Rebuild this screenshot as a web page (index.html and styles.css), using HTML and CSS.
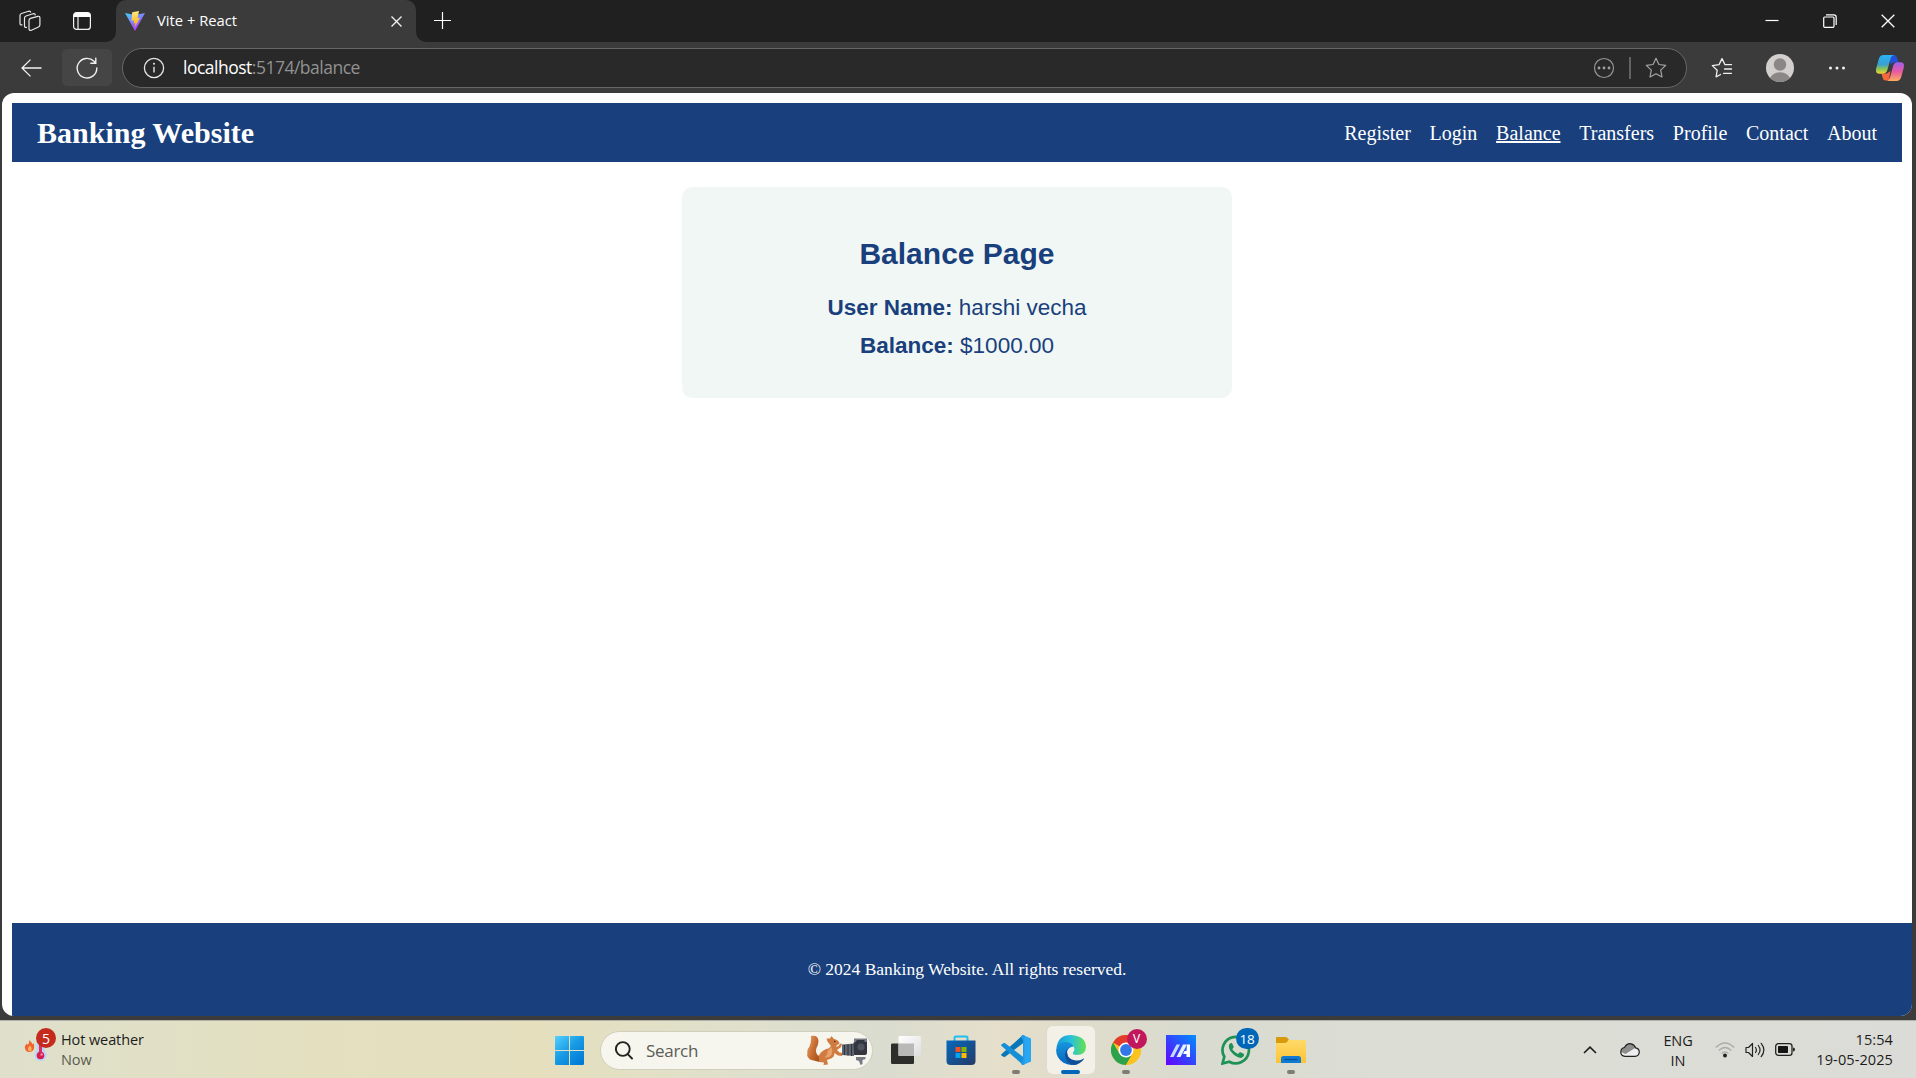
FILE: index.html
```html
<!DOCTYPE html>
<html lang="en">
<head>
<meta charset="utf-8">
<title>Vite + React</title>
<link rel="stylesheet" href="styles.css">
</head>
<body>
<div class="tabstrip">
  <div class="strip-left">
    <svg class="ic-workspaces" width="22" height="22" viewBox="0 0 22 22" fill="none" stroke="#e8e8e8" stroke-width="1.2" stroke-linejoin="round" stroke-linecap="round"><path d="M11.5 8.400 18.800 6.300Q20.900 5.900 20.900 7.800V14.800Q20.900 16.400 19.500 17L12.400 20.200Q10 21 10 18.800V10.500Q10 9 11.500 8.400Z"/><path d="M7.500 17.300Q5.500 17.800 5.500 16V8Q5.500 6.500 7 6L14 3.800Q16 3.300 16.200 4.800"/><path d="M3 14.800Q1 15.300 1 13.500V5.500Q1 4 2.500 3.500L9.500 1.300Q11.300.8 11.600 2.200"/></svg>
    <svg class="ic-tabs" width="18" height="18" viewBox="0 0 18 18"><rect x=".6" y=".6" width="16.800" height="16.800" rx="3" fill="none" stroke="#f2f2f2" stroke-width="1.2"/><path d="M.6 5V3.500Q.6.6 3.500.6h11Q17.400.6 17.400 3.500V5Z" fill="#fff"/><path d="M5 5v12" stroke="#f2f2f2" stroke-width="1.2"/></svg>
  </div>
  <div class="tab-cell"><div class="tab">
    <svg width="20" height="20" viewBox="0 0 20 20"><defs><linearGradient id="va" x1="0" y1="0" x2=".6" y2="1"><stop offset="0" stop-color="#41d1ff"/><stop offset="1" stop-color="#bd34fe"/></linearGradient><linearGradient id="vb" x1="0" y1="0" x2="0" y2="1"><stop offset="0" stop-color="#ffea83"/><stop offset="1" stop-color="#ffa800"/></linearGradient></defs><path d="M0 2 10 20 20 2 10 4Z" fill="url(#va)"/><path d="M14 0 7.200 1.200 6.500 10 9.200 9.400 8.500 12.500 10.500 12 9.700 16.500 15 6.800 12.500 7.200Z" fill="url(#vb)"/></svg>
    <span class="tab-title">Vite + React</span>
    <svg class="tab-close" width="11" height="11" viewBox="0 0 11 11"><path d="M.5.5l10 10M10.500.5l-10 10" stroke="#f0f0f0" stroke-width="1.4"/></svg>
  </div></div>
  <div class="strip-right">
    <svg width="18" height="18" viewBox="0 0 18 18"><path d="M8.500 0v17M0 8.500h17" stroke="#fff" stroke-width="1.200"/></svg>
    <div class="window-controls">
      <svg width="14" height="14" viewBox="0 0 14 14"><path d="M.5 6.500h13" stroke="#fff" stroke-width="1.200"/></svg>
      <svg width="14" height="14" viewBox="0 0 14 14" fill="none" stroke="#fff" stroke-width="1.200"><rect x=".7" y="3" width="10.300" height="10.300" rx="1"/><path d="M3 .8h7.800Q13.200.8 13.200 3.200V11"/></svg>
      <svg width="14" height="14" viewBox="0 0 14 14"><path d="M.7.7l12.600 12.600M13.300.7.7 13.300" stroke="#fff" stroke-width="1.300"/></svg>
    </div>
  </div>
</div>

<div class="toolbar">
  <svg class="ic-back" width="21" height="18" viewBox="0 0 21 18" fill="none" stroke="#f2f2f2" stroke-width="1.300"><path d="M20.500 9H1M9.500.6 1 9l8.500 8.400"/></svg>
  <div class="reload"><svg width="22" height="22" viewBox="0 0 22 22" fill="none" stroke="#f0f0f0" stroke-width="1.400" stroke-linecap="round"><path d="M20.800 11A9.800 9.800 0 1 1 18 4.300L19.800 6.200M19.800 1.200v5h-5"/></svg></div>
  <div class="address">
    <svg class="ic-info" width="22" height="22" viewBox="0 0 22 22"><circle cx="11" cy="11" r="9.600" fill="none" stroke="#e6e6e6" stroke-width="1.300"/><path d="M11 9.800v5.700" stroke="#e6e6e6" stroke-width="1.400"/><circle cx="11" cy="6.800" r="1" fill="#e6e6e6"/></svg>
    <span class="url"><b>localhost</b>:5174/balance</span>
    <svg class="ic-more" width="22" height="22" viewBox="0 0 22 22"><circle cx="11" cy="11" r="9.500" fill="none" stroke="#969696" stroke-width="1.200"/><g fill="#a0a0a0"><circle cx="6" cy="11" r="1.400"/><circle cx="11" cy="11" r="1.400"/><circle cx="16" cy="11" r="1.400"/></g></svg>
    <i class="divider"></i>
    <svg width="22" height="22" viewBox="0 0 22 22" fill="none" stroke="#a5a5a5" stroke-width="1.200" stroke-linejoin="round"><path d="M11 1.300 13.900 7.500 20.700 8.400 15.700 13.100 17 20 11 16.700 5 20 6.300 13.100 1.300 8.400 8.100 7.500Z"/></svg>
  </div>
  <svg class="ic-fav" width="22" height="22" viewBox="0 0 22 22" fill="none" stroke="#f0f0f0" stroke-width="1.300" stroke-linejoin="round" stroke-linecap="round"><path d="M14 7.700 11 1.600 8 7.700 1.300 8.600 6.200 13.200 5.100 19.800 9.500 17.500M14 7.700h6.500M13.500 12h7M12.500 16.300h8"/></svg>
  <svg class="ic-avatar" width="28" height="28" viewBox="0 0 28 28"><defs><clipPath id="av"><circle cx="14" cy="14" r="14"/></clipPath></defs><g clip-path="url(#av)"><rect width="28" height="28" fill="#d2d0ce"/><circle cx="14" cy="10.500" r="6.200" fill="#8b8785"/><ellipse cx="14" cy="25.500" rx="10" ry="7.200" fill="#8b8785"/></g></svg>
  <svg class="ic-dots" width="18" height="6" viewBox="0 0 18 6" fill="#f2f2f2"><circle cx="2.500" cy="3" r="1.500"/><circle cx="9" cy="3" r="1.500"/><circle cx="15.500" cy="3" r="1.500"/></svg>
  <svg class="ic-copilot" width="28" height="26" viewBox="0 0 28 26"><defs><linearGradient id="ca" x1="0" y1="0" x2="0" y2="1"><stop offset="0" stop-color="#28b5f5"/><stop offset=".5" stop-color="#3a9ed0"/><stop offset=".75" stop-color="#8cc653"/><stop offset="1" stop-color="#f7d233"/></linearGradient><linearGradient id="cb" x1=".4" y1="0" x2=".4" y2="1"><stop offset="0" stop-color="#a45cf0"/><stop offset=".5" stop-color="#e85aa0"/><stop offset="1" stop-color="#ffac5c"/></linearGradient></defs><path d="M13 0h5.500Q20.500 0 21.300 3l1.200 4.500H18Q15.500 7.500 14.800 10Z" fill="#2450d8"/><path d="M5.500 18.500H11L14.500 16 12.800 25.500H9.500Q7.300 25.500 6.700 23Z" fill="#f4663c"/><path d="M7.500 0H18Q15.500.3 14.700 3L11.500 14.500Q10.300 18.800 6.500 18.800H3.500Q-1.200 18.800.3 13L2.800 4Q4 0 7.500 0Z" fill="url(#ca)"/><path d="M20.500 26H11Q13 25.500 14 22.500L17 11.500Q18.200 7.300 21.500 7.300H24.500Q29 7.300 27.700 13L25.200 22Q24 26 20.500 26Z" fill="url(#cb)"/></svg>
</div>

<div class="viewport">
  <header class="navbar">
    <h1>Banking Website</h1>
    <nav><a>Register</a><a>Login</a><a class="active">Balance</a><a>Transfers</a><a>Profile</a><a>Contact</a><a>About</a></nav>
  </header>
  <main>
    <section class="card">
      <h2>Balance Page</h2>
      <p><strong>User Name:</strong> harshi vecha</p>
      <p><strong>Balance:</strong> $1000.00</p>
    </section>
  </main>
  <footer>© 2024 Banking Website. All rights reserved.</footer>
</div>

<div class="taskbar">
  <div class="weather">
    <div class="weather-icon">
      <svg width="36" height="34" viewBox="0 0 36 34"><path d="M5.500 11Q8 14 8.500 15.500L9.700 14Q11.500 21.500 7 22.700 1.500 24 .8 18.500.8 16 3 14.500L3.500 16Q5.500 14 5.500 11Z" fill="#f0642f"/><path d="M6 16.500Q8.500 19 7 22.200 3.500 22.500 4 19Z" fill="#ffb45a"/><path d="M12.500 6q4.500-4 8 0V21.500a6 6 0 1 1-8 0Z" fill="#b9d5fa"/><path d="M16.500 10v16" stroke="#e0305a" stroke-width="3"/><circle cx="16.500" cy="26.500" r="3.800" fill="#d81b50"/><circle cx="17.600" cy="25.500" r="1.200" fill="#ff8fa5"/></svg>
      <span class="badge weather-badge">5</span>
    </div>
    <div class="weather-text"><span>Hot weather</span><span class="muted">Now</span></div>
  </div>
  <div class="apps">
    <svg class="start" width="29" height="29" viewBox="0 0 29 29"><defs><linearGradient id="w" gradientUnits="userSpaceOnUse" x1="0" y1="0" x2="26" y2="29"><stop offset="0" stop-color="#53d1ff"/><stop offset=".5" stop-color="#179ae4"/><stop offset="1" stop-color="#0078d4"/></linearGradient></defs><path d="M1 0h13v14H0V1Q0 0 1 0ZM15 0h13q1 0 1 1v13H15ZM0 15h14v14H1q-1 0-1-1ZM15 15h14v13q0 1-1 1H15Z" fill="url(#w)"/></svg>
    <div class="search">
      <svg width="18" height="19" viewBox="0 0 18 19" fill="none" stroke="#222" stroke-width="1.900" stroke-linecap="round"><circle cx="7.800" cy="8" r="6.900"/><path d="M12.700 13.200 17 17.500"/></svg>
      <span>Search</span>
      <svg class="squirrel" width="62" height="31" viewBox="0 0 62 31"><defs><linearGradient id="sq" x1="0" y1="0" x2="1" y2=".6"><stop offset="0" stop-color="#e7a36c"/><stop offset=".6" stop-color="#c56a2e"/><stop offset="1" stop-color="#a9521f"/></linearGradient></defs><path d="M5 1Q12-.5 12.500 6 12.300 10 10.500 13 9 17 11.500 20L15 22 13.500 27Q8 25.500 4 24.500 0 22 1.500 18 .5 15 3.500 11.500 5.500 7 5 1Z" fill="url(#sq)"/><path d="M21.500 6.500 20.500 3.500 24 3.500 25.500 1 28 4Q32 4.500 33.500 8 33 9.500 31 10L30 12 32.500 11 34 8.500 36 9 35 12 31 15 33.500 17.500 37 18 36 21 32 20.500 28.500 18Q28.500 22 25 23.500L21 25 22 29.500 17.500 30 18 27.500 13.500 27Q11.500 21 14.500 18 18 14 22.500 13.500L25 11Z" fill="#d07c41"/><path d="M25.500 12Q27.500 18 24.500 21 21 23.500 18.500 22 22 20 21.500 16Z" fill="#e9a269"/><circle cx="28.800" cy="6.500" r=".8" fill="#33251c"/><path d="M36 9.500 48 8.500v12.500L36 20Z" fill="#626773"/><path d="M38.500 10v10M42 9.500V20.500M45.500 9v12" stroke="#30343d" stroke-width="1.200"/><path d="M47.500 8 50 4h8l3 3v11q0 2-2 2H48Z" fill="#343740"/><path d="M48 3.500h13V7H59L58 5H51L49 7.500H48Z" fill="#777b84"/><circle cx="55" cy="12" r="3.500" fill="#50545e"/><path d="M50 22h9.500v2l-3 1v4l-2 1-1.500-4-3-1Z" fill="#777983"/></svg>
    </div>
    <div class="app"><svg width="30" height="30" viewBox="0 0 30 30"><defs><linearGradient id="tv" x1="0" y1="0" x2="1" y2="1"><stop offset="0" stop-color="#fff"/><stop offset="1" stop-color="#dedede"/></linearGradient></defs><rect x="0" y="8.500" width="23" height="20.500" rx="1.300" fill="#2d2d2b"/><rect x="7.500" y="1" width="22.500" height="20" rx="1.300" fill="url(#tv)"/><path d="M7.500 8.500H23V21H7.500Z" fill="#b9b9b7"/></svg></div>
    <div class="app"><svg width="30" height="30" viewBox="0 0 30 30"><defs><linearGradient id="st" x1="0" y1="0" x2="1" y2="1"><stop offset="0" stop-color="#0669bd"/><stop offset="1" stop-color="#243a66"/></linearGradient></defs><path d="M8.500 6V3q0-1.500 1.500-1.500h10q1.500 0 1.500 1.500v3" fill="none" stroke="#22bdef" stroke-width="2"/><path d="M.5 5.500h29V26q0 4-4 4H4.500q-4 0-4-4Z" fill="url(#st)"/><path d="M9.500 12h5v5h-5Z" fill="#f25022"/><path d="M15.500 12h5v5h-5Z" fill="#7fba00"/><path d="M9.500 18h5v5h-5Z" fill="#00a4ef"/><path d="M15.500 18h5v5h-5Z" fill="#ffb900"/></svg></div>
    <div class="app running"><svg width="30" height="30" viewBox="0 0 30 30"><path d="M22 0 30 3.500v23L22 30Z" fill="#29a7f2"/><path d="M22 0v8.300L3.500 22.300.6 20.700q-1-.8 0-1.800Z" fill="#0877b9"/><path d="M22 30v-8.300L3.500 7.700.6 9.300q-1 .8 0 1.800Z" fill="#1590d8"/><path d="M22 0 23.500.4V29.600L22 30q-1.500 0-2-1.500L22 24V6L20 1.700Q20.500.2 22 0Z" fill="#209ae8"/></svg></div>
    <div class="app current"><svg width="30" height="30" viewBox="0 0 30 30"><defs><linearGradient id="ea" x1="0" y1=".4" x2="1" y2=".4"><stop offset="0" stop-color="#179bd5"/><stop offset=".5" stop-color="#29c1da"/><stop offset="1" stop-color="#66e34b"/></linearGradient><linearGradient id="eb" x1="0" y1="0" x2="0" y2="1"><stop offset="0" stop-color="#1596dc"/><stop offset="1" stop-color="#0866bd"/></linearGradient></defs><path d="M.4 13Q2 0 15 0 30 1 30 12q-.5 8-9 8-5 0-4-2.500 2.500-3 .5-6Q11 5 .4 13Z" fill="url(#ea)"/><path d="M.1 14.500Q2 7 9.500 7q6 .2 8 4.500Q12 12 11 17q0 10 11 12Q14 31.500 7.500 27.800 0 23 .1 14.500Z" fill="url(#eb)"/><path d="M11.500 13Q9 24 20 25.500q5 .5 7.500-2 .8 0 .3.800Q24.500 29 18.500 30 10 29.500 9 20q0-4 2.500-7Z" fill="#104f98"/></svg></div>
    <div class="app running"><svg width="30" height="30" viewBox="0 0 30 30"><circle cx="15" cy="15" r="15" fill="#fcc31e"/><path d="M2 7.500A15 15 0 0 1 28 7.500L15 15Z" fill="#e33b2e"/><path d="M2 7.500A15 15 0 0 0 15 30L21.500 18.800 15 15 8.500 18.800Z" fill="#2ba24c"/><path d="M15 7.500H28A15 15 0 0 1 15 30L21.500 18.700Z" fill="#fcc31e"/><circle cx="15" cy="15" r="7.500" fill="#fff"/><circle cx="15" cy="15" r="5.900" fill="#3478e8"/></svg><span class="badge profile-badge">V</span></div>
    <div class="app"><svg width="30" height="30" viewBox="0 0 30 30"><defs><linearGradient id="ma" x1="1" y1="0" x2="0" y2="1"><stop offset="0" stop-color="#008fff"/><stop offset=".5" stop-color="#3047ff"/><stop offset="1" stop-color="#6700ff"/></linearGradient></defs><path d="M0 0h30v30H0Z" fill="url(#ma)"/><path d="M4 22 10.500 9.500H14L7.500 22Z" fill="#c5dcff"/><path d="M10.500 22 17 9.500h4L14.500 22Z" fill="#e6f1ff"/><path d="M21 9.500h3V22H20.500V19H17L18.500 16H20.500Z" fill="#fff"/></svg></div>
    <div class="app"><svg width="30" height="30" viewBox="0 0 30 30"><path d="M1.500 28.500 3.300 21.800A13.200 13.200 0 1 1 8.300 26.700Z" fill="none" stroke="#1d9156" stroke-width="2.700"/><path d="M8 10Q9 7.500 11 8l1.800 4-1.500 2.200Q13.500 17.500 17 19l2-2 4 2q.5 2.500-2.500 3.800Q17 23.500 11.500 18.500 7 14 8 10Z" fill="#1d9156"/></svg><span class="badge chat-badge">18</span></div>
    <div class="app running"><svg width="30" height="30" viewBox="0 0 30 30"><defs><linearGradient id="fo" x1="0" y1="0" x2="0" y2="1"><stop offset="0" stop-color="#ffda69"/><stop offset="1" stop-color="#fcc334"/></linearGradient></defs><path d="M0 3q0-1 1-1H9q1.500 0 2.500 1L14 6 9 9H0Z" fill="#d79a0b"/><path d="M0 8H8.500Q10 8 11 7L12.500 5H29q1 0 1 1V28H0Z" fill="url(#fo)"/><path d="M5 28V23.500q0-2.500 2.500-2.500h15q2.500 0 2.500 2.500V28Z" fill="#117bd1"/><path d="M8.500 24.500h13" stroke="#07519a" stroke-width="1.300"/></svg></div>
  </div>
  <div class="tray">
    <svg class="ic-chevron" width="14" height="8" viewBox="0 0 14 8"><path d="M1 7 7 1.200 13 7" fill="none" stroke="#1d1d1d" stroke-width="1.600"/></svg>
    <svg class="ic-cloud" width="20" height="14" viewBox="0 0 20 14"><path d="M4.500 4.500Q7 0 11 .8q3.500.8 4.500 4Q19.300 5.500 19.300 9q-.3 4.200-4.300 4.300H5Q.8 13 .8 9 1 5 4.500 4.500Z" fill="#eee"/><path d="M4.500 4.500Q7 0 11 .8q3.500.8 4.500 4L5.500 11 1 9Q1 5 4.500 4.500Z" fill="#8d8d8b"/><path d="M4.500 4.500Q7 0 11 .8q3.500.8 4.500 4Q19.300 5.500 19.300 9q-.3 4.200-4.300 4.300H5Q.8 13 .8 9 1 5 4.500 4.500Z" fill="none" stroke="#222" stroke-width="1.200"/></svg>
    <div class="lang"><span>ENG</span><span>IN</span></div>
    <svg class="ic-wifi" width="20" height="16" viewBox="0 0 20 16"><g fill="none" stroke="#aaaba7" stroke-width="1.200"><path d="M.8 5.500q9.200-9 18.400 0M3.800 8.500q6.200-6 12.400 0M6.600 11.500q3.400-3.200 6.800 0"/></g><circle cx="10" cy="13.500" r="2" fill="#222"/></svg>
    <svg class="ic-sound" width="20" height="16" viewBox="0 0 20 16" fill="none" stroke="#222" stroke-width="1.200" stroke-linecap="round" stroke-linejoin="round"><path d="M1 5.500h2.500L7.500 1.500v13L3.500 10.500H1ZM10.500 5.500q1.800 2.500 0 5M13.300 3.500q3.500 4.500 0 9M16.200 1.300q5.300 6.700 0 13.400"/></svg>
    <svg class="ic-battery" width="20" height="13" viewBox="0 0 20 13"><rect x=".7" y=".7" width="16.300" height="11.600" rx="2.600" fill="none" stroke="#222" stroke-width="1.300"/><rect x="3" y="3" width="10" height="7" rx=".8" fill="#151515"/><path d="M18 4.500q2 0 2 2t-2 2Z" fill="#222"/></svg>
    <div class="clock"><span>15:54</span><span>19-05-2025</span></div>
  </div>
</div>
</body>
</html>
```
FILE: styles.css
```css
* { box-sizing: border-box; }
body {
  margin: 0;
  width: 1916px;
  height: 1078px;
  overflow: hidden;
  display: flex;
  flex-direction: column;
  background: #3b3b3b;
  font-family: "Open Sans", "Noto Sans", sans-serif;
}
svg { display: block; flex: none; }

/* Tab strip */
.tabstrip { display: flex; height: 42px; flex: none; }
.strip-left {
  width: 116px;
  padding-left: 19px;
  display: flex;
  align-items: center;
  gap: 32px;
  background: #202020;
  border-bottom-right-radius: 10px;
}
.tab-cell { width: 300px; background: linear-gradient(#202020 50%, #3b3b3b 50%); }
.tab {
  height: 42px;
  padding: 0 14px 0 9px;
  display: flex;
  align-items: center;
  background: #3b3b3b;
  border-radius: 10px 10px 0 0;
  color: #fff;
}
.tab-title { margin: -2px 0 0 12px; font-size: 14.75px; letter-spacing: 0; }
.tab-close { margin-left: auto; margin-top: 1px; }
.strip-right {
  flex: 1;
  display: flex;
  align-items: center;
  padding: 0 21px 0 18px;
  background: #202020;
  border-bottom-left-radius: 10px;
}
.window-controls { margin-left: auto; display: flex; gap: 44px; }

/* Toolbar */
.toolbar { display: flex; align-items: center; height: 51px; flex: none; padding-left: 21px; }
.reload {
  width: 50px;
  height: 37px;
  margin-left: 20px;
  display: grid;
  place-items: center;
  background: #454545;
  border-radius: 5px;
}
.address {
  width: 1565px;
  height: 40px;
  flex: none;
  margin-left: 10px;
  padding: 0 19px 0 20px;
  display: flex;
  align-items: center;
  background: #292929;
  border: 1px solid #676767;
  border-radius: 20px;
}
.url { margin: -2px 0 0 18px; font-size: 17.5px; letter-spacing: -0.5px; color: #929292; }
.url b { font-weight: 400; color: #fff; }
.ic-more { margin-left: auto; }
.divider { width: 2px; height: 22px; margin: 0 14px; background: #626262; }
.ic-fav { margin-left: 24px; }
.ic-avatar { margin-left: 33px; }
.ic-dots { margin-left: 34px; }
.ic-copilot { margin-left: 30px; }

/* Banking page */
.viewport {
  height: 923px;
  flex: none;
  margin: 0 4px 4px 2px;
  padding: 10px 0 0 10px;
  display: flex;
  flex-direction: column;
  overflow: hidden;
  background: #fff;
  border-radius: 12px;
  font-family: "Liberation Serif", serif;
}
.navbar {
  height: 59px;
  margin-right: 10px;
  padding: 0 25px;
  display: flex;
  align-items: center;
  justify-content: space-between;
  background: #193f7c;
  color: #fff;
}
.navbar h1 { margin: 0; font-size: 30px; }
nav { display: flex; gap: 18.75px; padding-top: 1px; font-size: 20px; }
nav .active { text-decoration: underline; }
main { flex: 1; margin-right: 10px; padding-top: 25px; }
.card {
  width: 550px;
  height: 211px;
  margin: 0 auto;
  padding: 49px 25px 25px;
  background: #f0f7f5;
  border-radius: 10px;
  color: #193f7c;
  font-family: "Liberation Sans", sans-serif;
  text-align: center;
}
.card h2 { margin: 0 0 18px; font-size: 30px; line-height: 35px; }
.card p { margin: 0; font-size: 22.5px; line-height: 38px; }
footer {
  height: 93px;
  padding-left: 10px;
  display: grid;
  place-items: center;
  background: #193f7c;
  color: #fff;
  font-size: 17.5px;
}

/* Taskbar */
.taskbar {
  height: 58px;
  flex: none;
  display: flex;
  border-top: 1px solid #b1b1aa;
  background: linear-gradient(90deg, #dfe0cc 0, #e3e0c0 300px, #e5dfbe 540px, #dfe0cc 740px, #dadcd0 880px, #e5dfca 1000px, #dfdccb 1080px, #d9dbd0 1200px, #dcddd4 1400px, #dbdcd7 1916px);
  color: #1c1c1c;
}
.badge {
  position: absolute;
  display: grid;
  place-items: center;
  border-radius: 50%;
  color: #fff;
}
.weather { width: 555px; display: flex; padding-left: 24px; }
.weather-icon { position: relative; width: 37px; padding-top: 8px; }
.weather-badge { left: 12px; top: 7px; width: 20px; height: 20px; background: #c42b1c; font-size: 14px; }
.weather-text, .lang, .clock { display: flex; flex-direction: column; padding-top: 9px; font-size: 14.5px; line-height: 20px; letter-spacing: -0.1px; }
.muted { color: #5a5a50; }
.apps { display: flex; align-items: center; padding-top: 1px; }
.start { margin-right: 16px; }
.search {
  width: 273px;
  height: 39px;
  margin-right: 5px;
  padding: 0 4px 0 14px;
  display: flex;
  align-items: center;
  background: #f6f6ee;
  border: 1px solid #d0cfbc;
  border-radius: 20px;
  color: #5c5c58;
  font-size: 17px;
  letter-spacing: -0.3px;
}
.search span { margin-left: 13px; }
.squirrel { margin-left: auto; }
.app {
  position: relative;
  width: 48px;
  height: 48px;
  margin: 0 3.500px;
  display: grid;
  place-items: center;
  border-radius: 6px;
}
.current { background: #f2f0e7; box-shadow: 0 0 0 1px #dfdccf; }
.running::after, .current::after {
  content: "";
  position: absolute;
  bottom: 0;
  left: 20px;
  width: 8px;
  height: 4px;
  border-radius: 2px;
  background: #7e7d74;
}
.current::after { left: 14.500px; width: 19px; background: #0066b8; }
.profile-badge { left: 25px; top: 3px; width: 20px; height: 20px; background: #c2185b; font: 12px Roboto, sans-serif; }
.chat-badge { left: 24px; top: 2px; width: 23px; height: 21px; border-radius: 11px; background: #0066b8; font-size: 13.500px; letter-spacing: -0.3px; }
.tray { flex: 1; display: flex; align-items: center; justify-content: flex-end; padding-right: 23px; }
.lang { align-self: flex-start; width: 30px; align-items: center; padding-top: 10px; }
.ic-chevron { margin-right: 23px; }
.ic-cloud { margin-right: 23px; }
.ic-wifi { margin-left: 22px; }
.ic-sound { margin-left: 10px; }
.ic-battery { margin-left: 10px; }
.clock { align-self: flex-start; width: 98px; align-items: flex-end; letter-spacing: 0.1px; }
```
